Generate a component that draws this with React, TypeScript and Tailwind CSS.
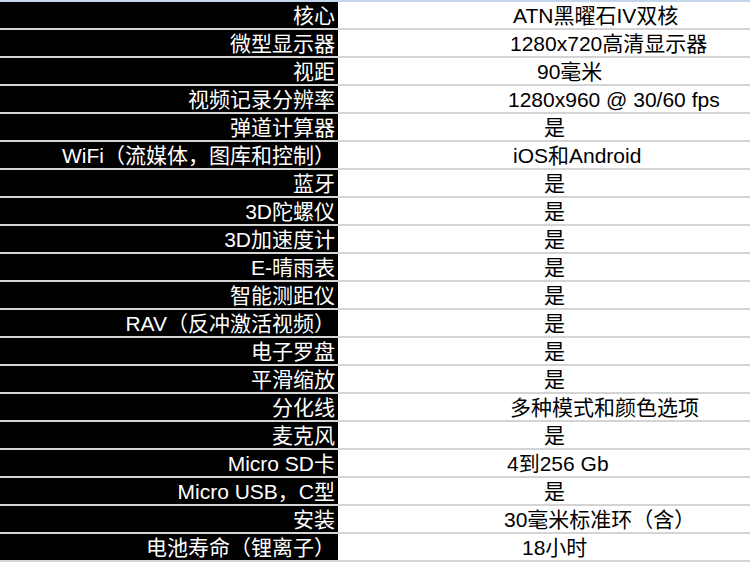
const rows: { label: string; value: string; pad: string }[] = [
  { label: '核心', value: 'ATN黑曜石IV双核', pad: 'pl-[175px]' },
  { label: '微型显示器', value: '1280x720高清显示器', pad: 'pl-[172px]' },
  { label: '视距', value: '90毫米', pad: 'pl-[199px]' },
  { label: '视频记录分辨率', value: '1280x960 @ 30/60 fps', pad: 'pl-[170px]' },
  { label: '弹道计算器', value: '是', pad: 'pl-[206px]' },
  { label: 'WiFi（流媒体，图库和控制）', value: 'iOS和Android', pad: 'pl-[175px]' },
  { label: '蓝牙', value: '是', pad: 'pl-[206px]' },
  { label: '3D陀螺仪', value: '是', pad: 'pl-[206px]' },
  { label: '3D加速度计', value: '是', pad: 'pl-[206px]' },
  { label: 'E-晴雨表', value: '是', pad: 'pl-[206px]' },
  { label: '智能测距仪', value: '是', pad: 'pl-[206px]' },
  { label: 'RAV（反冲激活视频）', value: '是', pad: 'pl-[206px]' },
  { label: '电子罗盘', value: '是', pad: 'pl-[206px]' },
  { label: '平滑缩放', value: '是', pad: 'pl-[206px]' },
  { label: '分化线', value: '多种模式和颜色选项', pad: 'pl-[172px]' },
  { label: '麦克风', value: '是', pad: 'pl-[206px]' },
  { label: 'Micro SD卡', value: '4到256 Gb', pad: 'pl-[169px]' },
  { label: 'Micro USB，C型', value: '是', pad: 'pl-[206px]' },
  { label: '安装', value: '30毫米标准环（含）', pad: 'pl-[166px]' },
  { label: '电池寿命（锂离子）', value: '18小时', pad: 'pl-[184px]' },
];

export default function App() {
  return (
    <div
      className="w-[750px] h-[566px] bg-white overflow-hidden text-[21px] leading-none"
      style={{ fontFamily: '"Liberation Sans", "Noto Sans CJK SC", sans-serif' }}
    >
      <div className="h-[2px] bg-[#c5d6ec]" />
      {rows.map((row, i) => (
        <div key={i} className="flex h-[28px] border-b-2 border-[#d4d4d4]">
          <div className="w-[338px] bg-black text-white flex items-center justify-end pr-[3px] whitespace-nowrap">
            {row.label}
          </div>
          <div className={`flex-1 flex items-center text-black whitespace-nowrap ${row.pad}`}>
            {row.value}
          </div>
        </div>
      ))}
    </div>
  );
}
